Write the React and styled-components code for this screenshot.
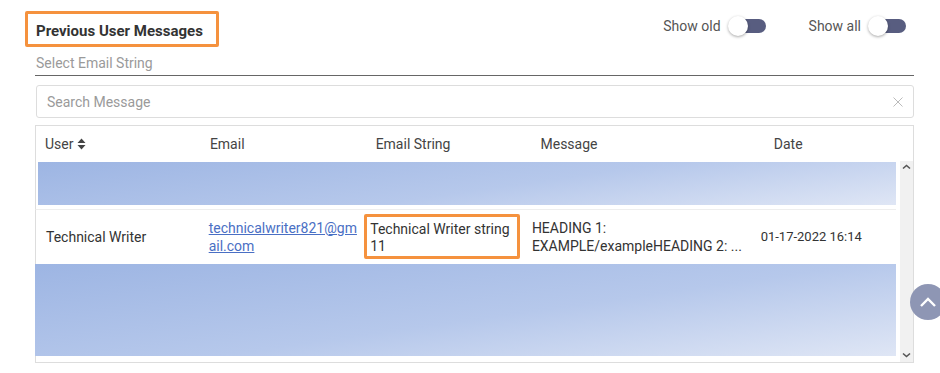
import React from "react";
import styled, { createGlobalStyle } from "styled-components";

const GlobalStyle = createGlobalStyle`
  body {
    margin: 0;
    background: #fff;
    font-family: Roboto, "Liberation Sans", Arial, sans-serif;
    color: #333;
  }
`;

const COLS = "18.8% 18.9% 18.8% 26.6% 1fr";
const ORANGE = "#f5923e";

const Page = styled.div`
  width: 940px;
  height: 373px;
  box-sizing: border-box;
  padding: 11px 26px 0 35px;
  position: relative;
  overflow: hidden;
`;

const TopBar = styled.div`
  display: flex;
  align-items: flex-start;
  justify-content: space-between;
`;

const TitleBox = styled.div`
  margin-left: -10px;
  height: 36px;
  box-sizing: border-box;
  border: 3px solid ${ORANGE};
  border-radius: 2px;
  padding: 3px 13px 0 8px;
  display: flex;
  align-items: center;
  font-size: 15px;
  font-weight: 700;
  color: #333;
`;

const Toggles = styled.div`
  display: flex;
  gap: 43px;
  padding-top: 7px;
  margin-right: 8px;
`;

const ToggleWrap = styled.label`
  display: flex;
  align-items: center;
  gap: 8px;
  font-size: 14px;
  color: #555;
`;

const Track = styled.span`
  position: relative;
  width: 37px;
  height: 14px;
  border-radius: 7px;
  background: #585d80;
`;

const Knob = styled.span`
  position: absolute;
  left: -1px;
  top: -3px;
  width: 20px;
  height: 20px;
  border-radius: 50%;
  background: #fff;
  box-shadow: 0 1px 3px rgba(0, 0, 0, 0.35);
`;

const SelectField = styled.div`
  margin-top: 5px;
  padding: 3px 0 4px 1px;
  border-bottom: 1px solid #666;
  font-size: 14px;
  color: #9a9a9a;
`;

const Search = styled.div`
  margin-top: 9px;
  margin-left: 1px;
  height: 33px;
  box-sizing: border-box;
  border: 1px solid #ddd;
  border-radius: 3px;
  display: flex;
  align-items: center;
  justify-content: space-between;
  padding: 1px 10px 0 10px;
  font-size: 14px;
  color: #9a9a9a;
`;

const Table = styled.div`
  margin-top: 7px;
  height: 238px;
  box-sizing: border-box;
  border: 1px solid #ddd;
  display: flex;
  flex-direction: column;
`;

const HeadRow = styled.div`
  display: grid;
  grid-template-columns: ${COLS};
  height: 35px;
  align-items: center;
  font-size: 14px;
  color: #444;
`;

const HeadCell = styled.div`
  padding-left: 9px;
  display: flex;
  align-items: center;
  gap: 4px;
`;

const BodyArea = styled.div`
  flex: 1;
  display: flex;
  min-height: 0;
`;

const Rows = styled.div`
  flex: 1;
  padding-right: 4px;
  display: flex;
  flex-direction: column;
`;

const Placeholder = styled.div`
  height: ${({ h }) => h}px;
  margin: ${({ m }) => m};
  background: linear-gradient(172deg, #9db5e3 0%, #b6c8eb 55%, #dfe6f5 100%);
`;

const Row = styled.div`
  display: grid;
  grid-template-columns: ${COLS};
  margin-top: 4px;
  margin-left: -1px;
  height: 53px;
  border-top: 1px solid #eee;
  border-left: 1px solid #ddd;
  align-items: center;
  font-size: 14px;
  color: #333;
`;

const Cell = styled.div`
  padding-left: ${({ pad }) => pad ?? 10}px;
  font-size: ${({ small }) => (small ? 13 : 14)}px;
  line-height: 18px;
  word-break: break-all;
`;

const MailLink = styled.a`
  color: #4a6fc4;
  text-decoration: underline;
`;

const Highlight = styled.div`
  margin-right: 2px;
  height: 45px;
  box-sizing: border-box;
  border: 3px solid ${ORANGE};
  border-radius: 2px;
  padding: 4px 3px 0;
  line-height: 17px;
`;

const OneLine = styled.div`
  white-space: nowrap;
`;

const ScrollBar = styled.div`
  width: 13px;
  background: #f1f1f1;
  display: flex;
  flex-direction: column;
  justify-content: space-between;
  align-items: center;
  padding: 3px 0 4px;
`;

const ScrollTop = styled.div`
  position: absolute;
  left: 910px;
  top: 284px;
  width: 36px;
  height: 36px;
  border-radius: 50%;
  background: #8e96b4;
  display: flex;
  align-items: center;
  justify-content: center;
`;

const Toggle = ({ label }) => (
  <ToggleWrap>
    {label}
    <Track>
      <Knob />
    </Track>
  </ToggleWrap>
);

const Chevron = ({ down }) => (
  <svg width="9" height="6" viewBox="0 0 9 6">
    <path
      d={down ? "M1 1.5 L4.5 4.5 L8 1.5" : "M1 4.5 L4.5 1.5 L8 4.5"}
      fill="none"
      stroke="#555"
      strokeWidth="1.6"
    />
  </svg>
);

const SortIcon = () => (
  <svg width="9" height="12" viewBox="0 0 9 12">
    <path d="M4.5 0.5 L8.5 5 L0.5 5 Z M0.5 7 L8.5 7 L4.5 11.5 Z" fill="#444" />
  </svg>
);

const ClearIcon = () => (
  <svg width="10" height="10" viewBox="0 0 10 10">
    <path d="M0.5 0.5 L9.5 9.5 M9.5 0.5 L0.5 9.5" stroke="#bbb" strokeWidth="1" />
  </svg>
);

export default function App() {
  return (
    <>
      <GlobalStyle />
      <Page>
        <TopBar>
          <TitleBox>Previous User Messages</TitleBox>
          <Toggles>
            <Toggle label="Show old" />
            <Toggle label="Show all" />
          </Toggles>
        </TopBar>

        <SelectField>Select Email String</SelectField>

        <Search>
          Search Message
          <ClearIcon />
        </Search>

        <Table>
          <HeadRow>
            <HeadCell>
              User <SortIcon />
            </HeadCell>
            <HeadCell>Email</HeadCell>
            <HeadCell>Email String</HeadCell>
            <HeadCell>Message</HeadCell>
            <HeadCell>Date</HeadCell>
          </HeadRow>
          <BodyArea>
            <Rows>
              <Placeholder h={43} m="1px 0 0 2px" />
              <Row>
                <Cell>Technical Writer</Cell>
                <Cell pad={11}>
                  <MailLink href="#">technicalwriter821@gmail.com</MailLink>
                </Cell>
                <Cell pad={4}>
                  <Highlight>Technical Writer string 11</Highlight>
                </Cell>
                <Cell>
                  <OneLine>HEADING 1:</OneLine>
                  <OneLine>EXAMPLE/exampleHEADING 2: ...</OneLine>
                </Cell>
                <Cell small>01-17-2022 16:14</Cell>
              </Row>
              <Placeholder h={92} m="1px 0 0 -1px" />
            </Rows>
            <ScrollBar>
              <Chevron />
              <Chevron down />
            </ScrollBar>
          </BodyArea>
        </Table>

        <ScrollTop>
          <svg width="18" height="12" viewBox="0 0 18 12">
            <path d="M2 10 L9 3 L16 10" fill="none" stroke="#fff" strokeWidth="2.4" />
          </svg>
        </ScrollTop>
      </Page>
    </>
  );
}
